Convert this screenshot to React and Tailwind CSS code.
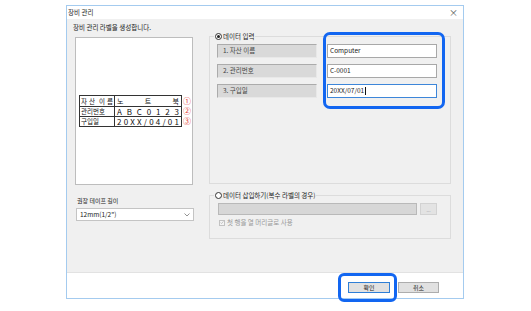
const FONT = "font-['Noto_Sans_CJK_KR','Noto_Sans','Liberation_Sans',sans-serif]";

function Spread({ text, className }) {
  return (
    <div className={`flex justify-between ${className}`}>
      {text.split('').map((c, i) => (
        <span key={i}>{c}</span>
      ))}
    </div>
  );
}

function Radio({ checked }) {
  return (
    <span className="w-[7px] h-[7px] rounded-full border border-[#333] bg-white flex items-center justify-center shrink-0">
      {checked && <span className="w-[3px] h-[3px] rounded-full bg-[#222]" />}
    </span>
  );
}

const ROWS = [
  { label: '1. 자산 이름', value: 'Computer' },
  { label: '2. 관리번호', value: 'C-0001' },
  { label: '3. 구입일', value: '20XX/07/01', focus: true },
];

export default function App() {
  return (
    <div className={`w-[531px] h-[311px] bg-white pt-[5px] pl-[66px] ${FONT} text-[#222]`}>
      <div className="relative w-[398px] h-[294px] border border-[#a4cbef] bg-white flex flex-col">
        {/* title bar */}
        <div className="h-[13px] flex items-center justify-between pl-[1px] pr-[5px] text-[6.5px] leading-none">
          <span>장비 관리</span>
          <span className="text-[9px] text-[#555] leading-none">×</span>
        </div>

        {/* body */}
        <div className="h-[253px] bg-[#f0f0f0] flex">
          <div className="w-[142px] pl-[6px] pt-[4px]">
            <div className="h-[9px] text-[6.5px] leading-[9px]">장비 관리 라벨을 생성합니다.</div>
            <div className="mt-[5px] ml-[2px] w-[118px] h-[148px] bg-white border border-[#bdbdbd] flex items-center justify-center pl-[2px]">
              <div className="flex items-center">
                <div className="border border-[#333] text-[7px] leading-none text-[#111]">
                  {[
                    ['자산이름', '노트북'],
                    ['관리번호', 'ABC0123'],
                    ['구입일', '20XX/04/01'],
                  ].map(([a, b], i) => (
                    <div key={i} className={`flex h-[10px] ${i > 0 ? 'border-t border-[#333]' : ''}`}>
                      <div className="w-[35px] border-r border-[#333] flex items-center px-[1px] text-[6.5px]">
                        {i === 0 ? (
                          <Spread text="자산 이름" className="w-full" />
                        ) : (
                          <span>{a}</span>
                        )}
                      </div>
                      <div className="w-[66px] flex items-center px-[2px] text-[8px]">
                        {i === 0 ? (
                          <Spread text="노 트 북" className="w-full text-[7px]" />
                        ) : (
                          <Spread text={b} className="w-full" />
                        )}
                      </div>
                    </div>
                  ))}
                </div>
                <div className="flex flex-col text-[#e53935] text-[8px] leading-none ml-[1px]">
                  <span className="h-[10px] flex items-center">①</span>
                  <span className="h-[10px] flex items-center">②</span>
                  <span className="h-[10px] flex items-center">③</span>
                </div>
              </div>
            </div>
            <div className="mt-[11px] ml-[4px] h-[9px] text-[6px] leading-[9px]">권장 테이프 길이</div>
            <div className="mt-[3px] ml-[3px] w-[118px] h-[13px] bg-white border border-[#c4c4c4] flex items-center justify-between px-[3px] text-[6.5px]">
              <span>12mm(1/2")</span>
              <svg width="6" height="4" viewBox="0 0 6 4">
                <path d="M0.5 0.5 L3 3 L5.5 0.5" fill="none" stroke="#777" strokeWidth="0.8" />
              </svg>
            </div>
          </div>

          <div className="flex-1 flex flex-col">
            <fieldset className="mt-[13px] w-[242px] h-[152px] border border-[#dcdcdc] px-0 pb-0">
              <legend className="ml-[4px] px-[1px] h-[9px] flex items-center gap-[1px] text-[6.5px] leading-none">
                <Radio checked />
                <span>데이터 입력</span>
              </legend>
              <div className="mt-[3px] pl-[7px] flex flex-col gap-[6px]">
                {ROWS.map((r) => (
                  <div key={r.label} className="flex h-[14px] gap-[10px]">
                    <div className="w-[100px] bg-[#d9d9d9] border border-[#ababab] border-r-[#e8e8e8] border-b-[#e8e8e8] flex items-center pl-[5px] text-[6.5px] text-[#444]">
                      {r.label}
                    </div>
                    <div
                      className={`w-[110px] bg-white border flex items-center pl-[2px] text-[6.5px] ${
                        r.focus ? 'border-[#3d86d9]' : 'border-[#a8a8a8]'
                      }`}
                    >
                      <span>{r.value}</span>
                      {r.focus && <span className="w-[1px] h-[8px] bg-[#111] ml-[1px]" />}
                    </div>
                  </div>
                ))}
              </div>
            </fieldset>

            <fieldset className="mt-[7px] w-[242px] h-[48px] border border-[#dcdcdc] px-0 pb-0">
              <legend className="ml-[4px] px-[1px] h-[9px] flex items-center gap-[1px] text-[6.5px] leading-none">
                <Radio />
                <span>데이터 삽입하기(복수 라벨의 경우)</span>
              </legend>
              <div className="mt-[3px] pl-[8px] flex gap-[3px]">
                <div className="w-[199px] h-[12px] bg-[#d7d7d7] border border-[#b9b9b9]" />
                <div className="w-[17px] h-[12px] bg-[#e3e3e3] border border-[#d2d2d2] flex items-center justify-center text-[5px] text-[#aaa] leading-none">
                  ...
                </div>
              </div>
              <div className="mt-[3px] pl-[9px] h-[9px] flex items-center gap-[2px] text-[6.5px] text-[#9a9a9a] leading-none">
                <span className="w-[6px] h-[6px] border border-[#c2c2c2] bg-[#f4f4f4] flex items-center justify-center">
                  <svg width="5" height="5" viewBox="0 0 5 5">
                    <path d="M0.7 2.6 L2 3.8 L4.3 1" fill="none" stroke="#aaa" strokeWidth="0.8" />
                  </svg>
                </span>
                <span>첫 행을 열 머리글로 사용</span>
              </div>
            </fieldset>
          </div>
        </div>

        {/* footer */}
        <div className="flex-1 border-t border-[#e2e2e2] bg-white flex justify-end items-start pt-[9px] pr-[24px] gap-[8px]">
          <button className="w-[42px] h-[11px] bg-[#e1e1e1] border border-[#2f7fd6] text-[6px] leading-none flex items-center justify-center">
            확인
          </button>
          <button className="w-[41px] h-[11px] bg-[#e1e1e1] border border-[#adadad] text-[6px] leading-none flex items-center justify-center">
            취소
          </button>
        </div>

        {/* callout highlights */}
        <div className="absolute left-[256px] top-[26px] w-[122px] h-[77px] border-[3px] border-[#1266f1] rounded-[7px] pointer-events-none" />
        <div className="absolute left-[271px] top-[267px] w-[59px] h-[29px] border-[3px] border-[#1266f1] rounded-[6px] pointer-events-none" />
      </div>
    </div>
  );
}
